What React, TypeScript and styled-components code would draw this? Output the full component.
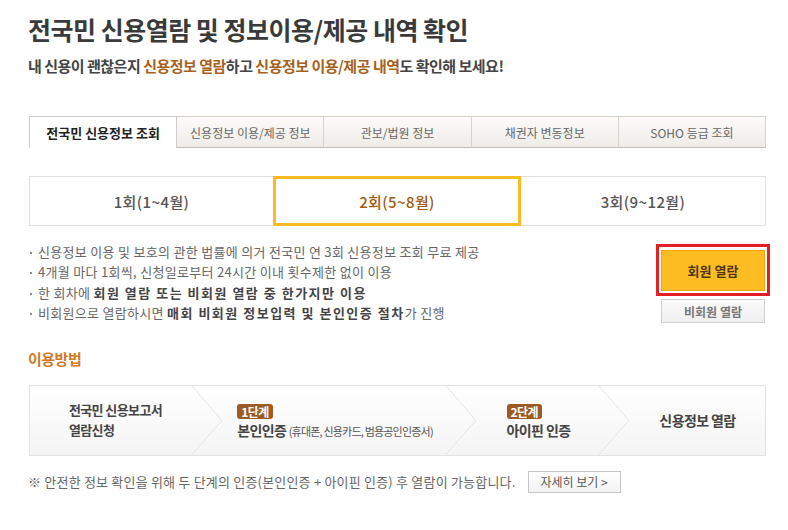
import React from 'react';
import styled, { createGlobalStyle, css } from 'styled-components';

const GlobalStyle = createGlobalStyle`
  html, body {
    margin: 0;
    padding: 0;
    background: #fff;
  }
  body {
    font-family: "Noto Sans CJK KR", "Noto Sans", sans-serif;
    color: #666;
  }
  * {
    box-sizing: border-box;
  }
`;

const Page = styled.div`
  width: 737px;
  margin-left: 29px;
  padding-top: 12px;
`;

const Title = styled.h1`
  margin: 0;
  font-size: 25px;
  line-height: 34px;
  font-weight: 700;
  letter-spacing: -0.5px;
  color: #3a3a3a;
  margin-left: -1px;
`;

const SubTitle = styled.p`
  margin: 8px 0 0;
  font-size: 15px;
  line-height: 24px;
  font-weight: 700;
  letter-spacing: -0.5px;
  color: #444;
  margin-left: -1px;
`;

const Hl = styled.span`
  color: #a8611c;
`;

const Tabs = styled.ul`
  list-style: none;
  margin: 38px 0 0;
  padding: 0;
  display: flex;
  height: 32px;
`;

const Tab = styled.li<{ $active?: boolean }>`
  flex: 1;
  display: flex;
  align-items: center;
  justify-content: center;
  font-size: 12px;
  ${({ $active }) =>
    $active
      ? css`
          background: #fff;
          border: 1px solid #ccc;
          border-bottom: none;
          color: #222;
          font-size: 13px;
          font-weight: 700;
        `
      : css`
          background: linear-gradient(#fcfbfa, #efece8);
          border-top: 1px solid #d8d1c8;
          border-right: 1px solid #d8d1c8;
          border-bottom: 1px solid #c4beb6;
          color: #666;
        `}
`;

const Rounds = styled.div`
  margin-top: 28px;
  display: grid;
  grid-template-columns: 243px 248px 1fr;
  height: 50px;
  border: 1px solid #e0e0e0;
`;

const Round = styled.div<{ $selected?: boolean }>`
  display: flex;
  align-items: center;
  justify-content: center;
  font-size: 15px;
  font-weight: 500;
  letter-spacing: 0.4px;
  color: ${({ $selected }) => ($selected ? '#a0580e' : '#555')};
  ${({ $selected }) =>
    $selected &&
    css`
      border: 3px solid #fdbb1f;
      margin: -1px 0;
    `}
`;

const InfoRow = styled.div`
  margin-top: 16px;
  display: flex;
  justify-content: space-between;
  align-items: flex-start;
`;

const Bullets = styled.ul`
  list-style: none;
  margin: 0;
  padding: 0;
`;

const Bullet = styled.li`
  position: relative;
  padding-left: 9px;
  font-size: 13px;
  line-height: 20.4px;
  color: #666;
  letter-spacing: 0.3px;
  &::before {
    content: '';
    position: absolute;
    left: 1px;
    top: 10px;
    width: 2px;
    height: 2px;
    background: #888;
  }
  b {
    color: #444;
    font-weight: 700;
    letter-spacing: 1.5px;
  }
`;

const ButtonColumn = styled.div`
  width: 114px;
  margin: 2px -4px 0 0;
  display: flex;
  flex-direction: column;
  align-items: center;
`;

const Highlight = styled.div`
  border: 3px solid #e31e25;
  padding: 3px 2px 2px;
  width: 114px;
`;

const MemberButton = styled.button`
  display: block;
  width: 104px;
  height: 41px;
  border: 1px solid #f0a800;
  background: #fdbc22;
  color: #4e3510;
  font-family: inherit;
  font-size: 13px;
  font-weight: 700;
  cursor: pointer;
`;

const GuestButton = styled.button`
  margin-top: 3px;
  width: 104px;
  height: 24px;
  border: 1px solid #cfcfcf;
  background: linear-gradient(#fafafa, #efefef);
  color: #777;
  font-family: inherit;
  font-size: 12px;
  font-weight: 700;
  cursor: pointer;
`;

const SectionTitle = styled.h2`
  margin: 25px 0 0;
  font-size: 15px;
  line-height: 20px;
  font-weight: 700;
  letter-spacing: -0.5px;
  color: #d17a24;
  margin-left: -1px;
`;

const Steps = styled.div`
  margin-top: 16px;
  height: 71px;
  display: flex;
  border: 1px solid #e2e2e2;
  background: linear-gradient(#fff, #f4f4f4);
`;

const Step = styled.div<{ $w?: number; $first?: boolean }>`
  position: relative;
  ${({ $w }) => ($w ? `width: ${$w}px;` : 'flex: 1;')}
  padding-left: ${({ $first }) => ($first ? 8 : 30)}px;
  display: flex;
  align-items: center;
  justify-content: center;
`;

const StepBody = styled.div`
  font-size: 13px;
  line-height: 20px;
  color: #444;
  font-weight: 700;
  letter-spacing: -0.6px;
`;

const StepMain = styled.span`
  font-size: 14px;
`;

const StepSub = styled.span`
  font-size: 11px;
  font-weight: 400;
  color: #555;
  letter-spacing: -0.8px;
`;

const Badge = styled.span`
  display: inline-block;
  padding: 0 4px;
  height: 15px;
  line-height: 15px;
  border-radius: 3px;
  background: #9c5b22;
  color: #fff;
  font-size: 12px;
  font-weight: 700;
  letter-spacing: -0.5px;
  vertical-align: middle;
`;

const ChevronSvg = styled.svg`
  position: absolute;
  top: 0;
  right: -31px;
  width: 32px;
  height: 100%;
  z-index: 1;
`;

const Chevron = () => (
  <ChevronSvg viewBox="0 0 32 70" preserveAspectRatio="none">
    <polyline points="1,0 31,35 1,70" fill="none" stroke="#fff" strokeWidth="1" />
    <polyline points="0,0 30,35 0,70" fill="none" stroke="#e2e2e2" strokeWidth="1" />
  </ChevronSvg>
);

const NoteRow = styled.div`
  margin-top: 15px;
  display: flex;
  align-items: center;
  gap: 12px;
`;

const Note = styled.p`
  margin: 0;
  font-size: 13px;
  color: #666;
  letter-spacing: 0.2px;
  margin-left: -1px;
`;

const MoreButton = styled.button`
  width: 93px;
  height: 22px;
  border: 1px solid #c5c5c5;
  background: linear-gradient(#fff, #f3f3f3);
  color: #555;
  font-family: inherit;
  font-size: 12px;
  cursor: pointer;
`;

const tabs = ['전국민 신용정보 조회', '신용정보 이용/제공 정보', '관보/법원 정보', '채권자 변동정보', 'SOHO 등급 조회'];
const rounds = ['1회(1~4월)', '2회(5~8월)', '3회(9~12월)'];

export default function App() {
  return (
    <>
      <GlobalStyle />
      <Page>
        <Title>전국민 신용열람 및 정보이용/제공 내역 확인</Title>
        <SubTitle>
          내 신용이 괜찮은지 <Hl>신용정보 열람</Hl>하고 <Hl>신용정보 이용/제공 내역</Hl>도 확인해 보세요!
        </SubTitle>

        <Tabs>
          {tabs.map((t, i) => (
            <Tab key={t} $active={i === 0}>
              {t}
            </Tab>
          ))}
        </Tabs>

        <Rounds>
          {rounds.map((r, i) => (
            <Round key={r} $selected={i === 1}>
              {r}
            </Round>
          ))}
        </Rounds>

        <InfoRow>
          <Bullets>
            <Bullet>신용정보 이용 및 보호의 관한 법률에 의거 전국민 연 3회 신용정보 조회 무료 제공</Bullet>
            <Bullet>4개월 마다 1회씩, 신청일로부터 24시간 이내 횟수제한 없이 이용</Bullet>
            <Bullet>
              한 회차에 <b>회원 열람 또는 비회원 열람 중 한가지만 이용</b>
            </Bullet>
            <Bullet>
              비회원으로 열람하시면 <b>매회 비회원 정보입력 및 본인인증 절차</b>가 진행
            </Bullet>
          </Bullets>
          <ButtonColumn>
            <Highlight>
              <MemberButton>회원 열람</MemberButton>
            </Highlight>
            <GuestButton>비회원 열람</GuestButton>
          </ButtonColumn>
        </InfoRow>

        <SectionTitle>이용방법</SectionTitle>
        <Steps>
          <Step $w={163} $first>
            <StepBody>
              전국민 신용보고서
              <br />
              열람신청
            </StepBody>
            <Chevron />
          </Step>
          <Step $w={254}>
            <StepBody>
              <Badge>1단계</Badge>
              <br />
              <StepMain>본인인증</StepMain> <StepSub>(휴대폰, 신용카드, 범용공인인증서)</StepSub>
            </StepBody>
            <Chevron />
          </Step>
          <Step $w={153}>
            <StepBody>
              <Badge>2단계</Badge>
              <br />
              <StepMain>아이핀 인증</StepMain>
            </StepBody>
            <Chevron />
          </Step>
          <Step>
            <StepBody>
              <StepMain>신용정보 열람</StepMain>
            </StepBody>
          </Step>
        </Steps>

        <NoteRow>
          <Note>※ 안전한 정보 확인을 위해 두 단계의 인증(본인인증 + 아이핀 인증) 후 열람이 가능합니다.</Note>
          <MoreButton>자세히 보기 &gt;</MoreButton>
        </NoteRow>
      </Page>
    </>
  );
}
